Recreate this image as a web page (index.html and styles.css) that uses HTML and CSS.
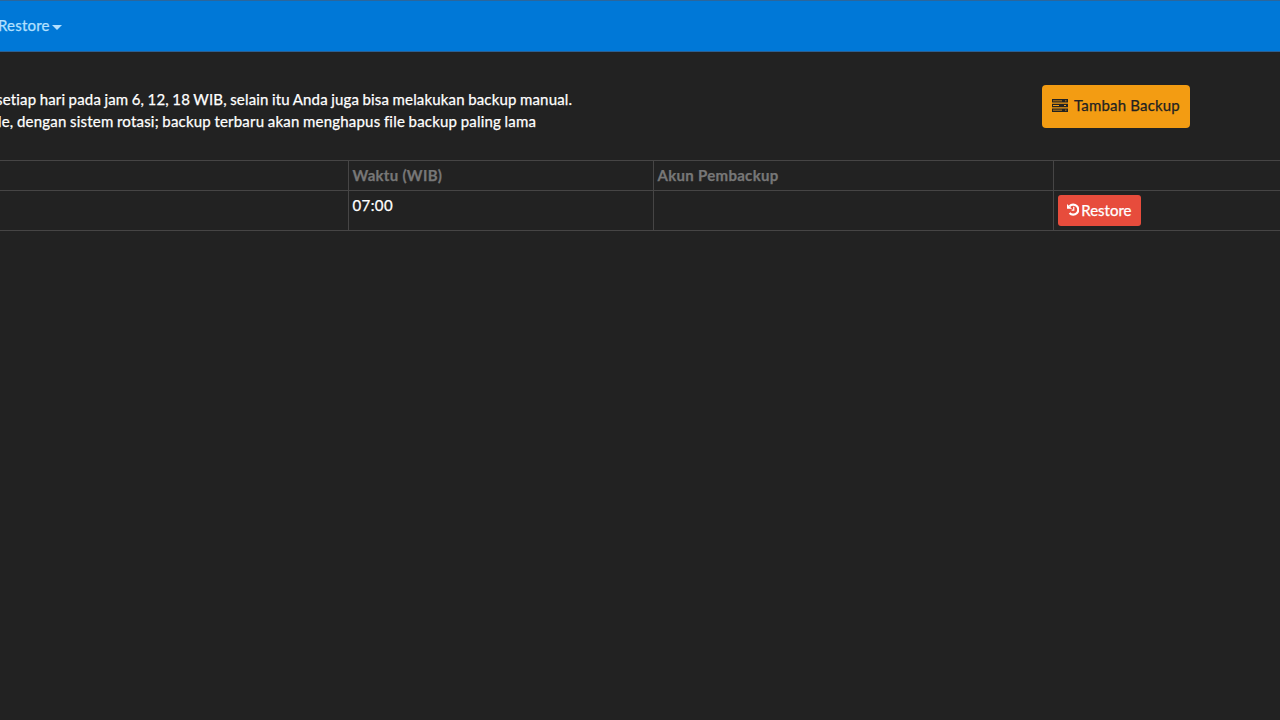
FILE: index.html
```html
<!DOCTYPE html>
<html lang="id">
<head>
  <meta charset="UTF-8">
  <meta name="viewport" content="width=device-width, initial-scale=1.0">
  <title>Backup &amp; Restore</title>
  <link rel="stylesheet" href="styles.css">
</head>
<body>
  <nav class="navbar">
    <a class="nav-link">Restore<span class="caret"></span></a>
  </nav>

  <div class="info">
    <div class="info-text">
      <div class="line-1">setiap hari pada jam 6, 12, 18 WIB, selain itu Anda juga bisa melakukan backup manual.</div>
      <div class="line-2">le, dengan sistem rotasi; backup terbaru akan menghapus file backup paling lama</div>
    </div>
    <button class="btn btn-warning">
      <svg class="icon-server" width="16" height="13" viewBox="0 0 16 13">
        <path d="M0 0h16v3.6H0zM0 4.7h16v3.6H0zM0 9.4h16v3.6H0z" fill="#222"/>
        <path d="M1 1.4h9v.8H1zM1 6.1h6v.8H1zM1 10.8h9v.8H1zM13 1.4h1.5v.8H13zM12 6.1h2v.8h-2zM13 10.8h1.5v.8H13z" fill="#f39c12"/>
      </svg>
      <span>Tambah Backup</span>
    </button>
  </div>

  <table class="table">
    <thead>
      <tr>
        <th class="col-date"></th>
        <th class="col-time">Waktu (WIB)</th>
        <th class="col-account">Akun Pembackup</th>
        <th></th>
      </tr>
    </thead>
    <tbody>
      <tr>
        <td></td>
        <td>07:00</td>
        <td></td>
        <td>
          <button class="btn btn-danger">
            <svg class="icon-history" width="13" height="13" viewBox="0 0 13 13" fill="none" stroke="#fff">
              <path d="M2.6 3.2A5.1 5.1 0 1 1 2.6 10.1" stroke-width="2.2"/>
              <path d="M0 .8V5.8H5.1z" fill="#fff" stroke="none"/>
              <path d="M6.9 3.8V7.2H4.7" stroke-width="1.2"/>
            </svg>
            <span>Restore</span>
          </button>
        </td>
      </tr>
    </tbody>
  </table>
</body>
</html>
```

FILE: styles.css
```css
body {
  margin: 0;
  background-color: #222;
  color: #fff;
  font-family: Lato, "Liberation Sans", sans-serif;
  font-size: 15px;
  line-height: 22px;
  -webkit-text-stroke: 0.25px;
}

.navbar {
  box-sizing: border-box;
  height: 52px;
  border-top: 1px solid #2c669b;
  border-bottom: 1px solid #2c5f91;
  background-color: #0078d7;
  display: flex;
  align-items: center;
}

.nav-link {
  display: flex;
  align-items: center;
  margin-left: -2px;
  margin-bottom: 2px;
  color: #b3e0ff;
  letter-spacing: 0.2px;
}

.caret {
  margin-left: 2px;
  margin-top: 4px;
  border-top: 5px solid #b3e0ff;
  border-left: 5px solid transparent;
  border-right: 5px solid transparent;
}

.info {
  display: flex;
  justify-content: space-between;
  align-items: flex-start;
  padding: 33px 90px 0 0;
  height: 75px;
}

.info-text {
  padding-top: 3px;
  white-space: nowrap;
}

.line-1 {
  margin-left: -4px;
  letter-spacing: 0.17px;
  word-spacing: -0.6px;
}

.line-2 {
  margin-left: -2px;
  letter-spacing: 0.2px;
  word-spacing: -0.5px;
}

.btn {
  display: flex;
  align-items: center;
  box-sizing: border-box;
  border: none;
  font-family: inherit;
  font-size: 15px;
  line-height: 22px;
}

.btn-warning {
  width: 148px;
  height: 43px;
  padding: 0 10px 3px;
  border-radius: 4px;
  background-color: #f39c12;
  color: #222;
  letter-spacing: 0.18px;
  white-space: nowrap;
}

.icon-server {
  margin-right: 6px;
}

.btn-danger {
  width: 83px;
  height: 31px;
  padding: 0 9px 2px;
  border-radius: 3px;
  background-color: #e74c3c;
  color: #fff;
}

.icon-history {
  margin-right: 2px;
}

.table {
  width: 100%;
  table-layout: fixed;
  border-collapse: collapse;
}

.table th,
.table td {
  box-sizing: border-box;
  border: 1px solid #464545;
  padding: 4px;
  text-align: left;
  vertical-align: top;
}

.table th:first-child,
.table td:first-child {
  border-left: none;
}

.table th:last-child,
.table td:last-child {
  border-right: none;
}

.table th {
  height: 30px;
  color: #777;
  font-weight: bold;
  line-height: 21px;
  letter-spacing: 0.3px;
}

.table td {
  height: 40px;
  line-height: 21px;
}

.table td:nth-child(2) {
  letter-spacing: 0.4px;
}

.col-date {
  width: 348px;
}

.col-time {
  width: 305px;
}

.col-account {
  width: 400px;
}
```
